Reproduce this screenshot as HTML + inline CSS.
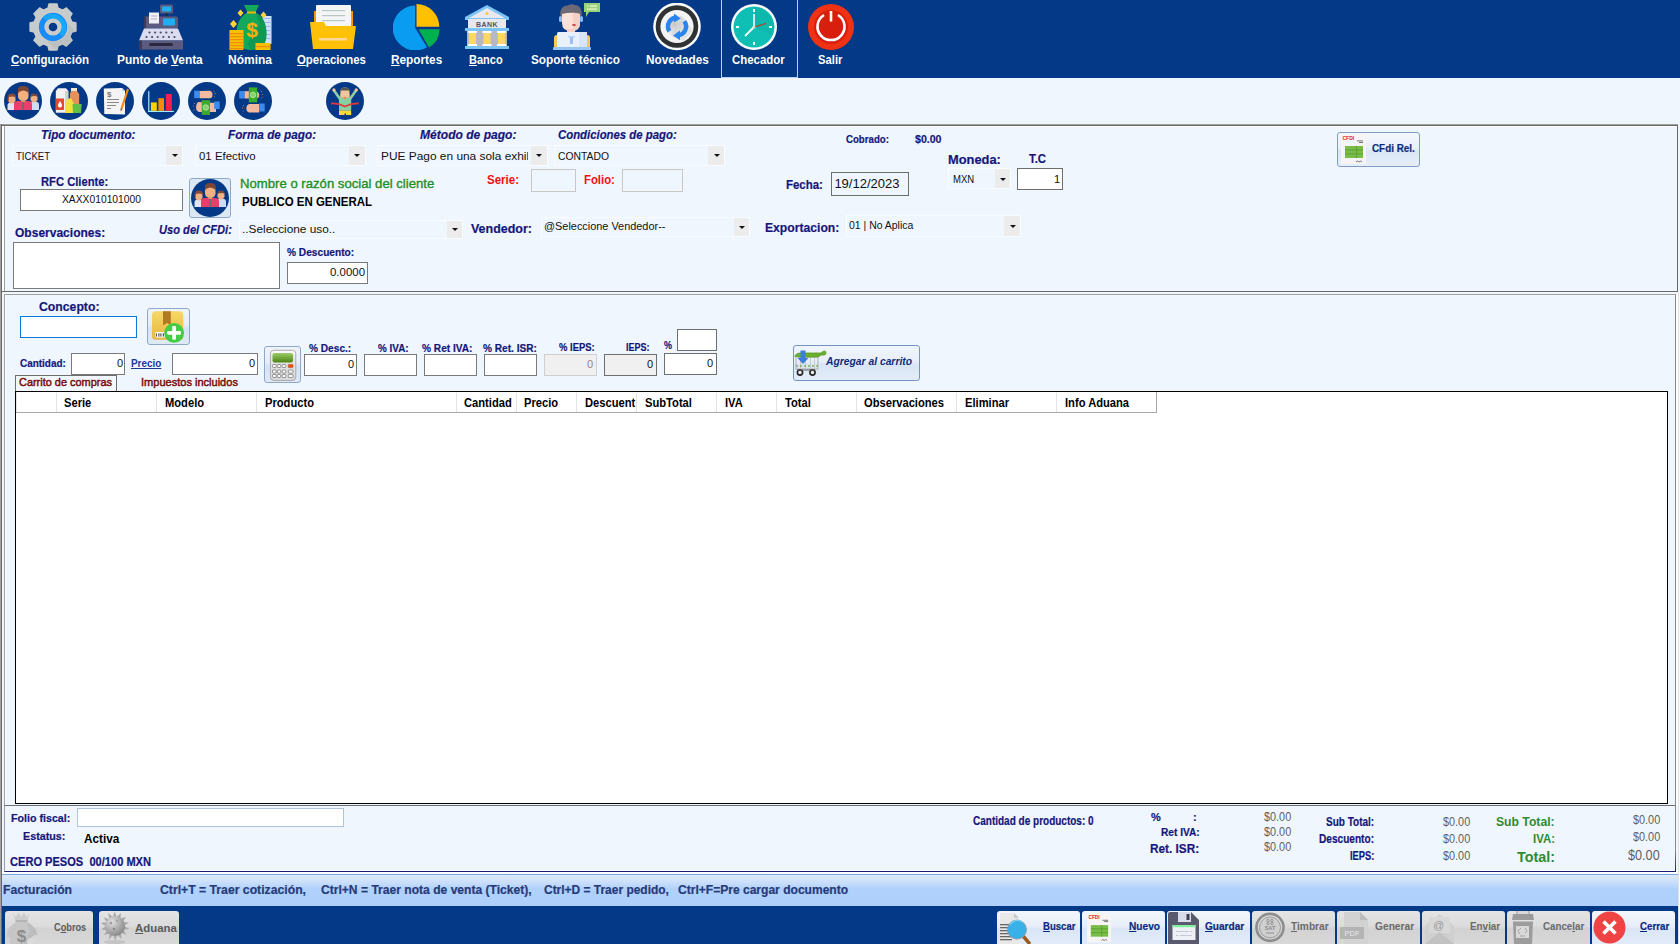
<!DOCTYPE html>
<html><head><meta charset="utf-8"><title>Facturacion</title>
<style>
html,body{margin:0;padding:0;}
body{width:1680px;height:944px;overflow:hidden;position:relative;background:#f0f6fe;font-family:"Liberation Sans",sans-serif;}
body>div{position:absolute;}
.t{white-space:pre;}
u{text-decoration:underline;text-underline-offset:1px;}
svg{display:block;}
</style></head><body>
<div style="left:0px;top:0px;width:1680px;height:78px;background:#033986"></div>
<div style="left:721px;top:0px;width:77px;height:78px;border-left:1px solid #b4d4fc;border-right:1px solid #b4d4fc;border-bottom:1px solid #b4d4fc;box-sizing:border-box;height:78px"></div>
<div style="left:29px;top:3px;width:48px;height:48px"><svg width="48" height="48" viewBox="0 0 48 48"><defs><clipPath id="gclip"><polygon points="18.95,5.16 19.95,1.05 28.05,1.05 29.05,5.16 33.75,7.11 37.36,4.91 43.09,10.64 40.89,14.25 42.84,18.95 46.95,19.95 46.95,28.05 42.84,29.05 40.89,33.75 43.09,37.36 37.36,43.09 33.75,40.89 29.05,42.84 28.05,46.95 19.95,46.95 18.95,42.84 14.25,40.89 10.64,43.09 4.91,37.36 7.11,33.75 5.16,29.05 1.05,28.05 1.05,19.95 5.16,18.95 7.11,14.25 4.91,10.64 10.64,4.91 14.25,7.11"/></clipPath></defs><polygon points="18.95,5.16 19.95,1.05 28.05,1.05 29.05,5.16 33.75,7.11 37.36,4.91 43.09,10.64 40.89,14.25 42.84,18.95 46.95,19.95 46.95,28.05 42.84,29.05 40.89,33.75 43.09,37.36 37.36,43.09 33.75,40.89 29.05,42.84 28.05,46.95 19.95,46.95 18.95,42.84 14.25,40.89 10.64,43.09 4.91,37.36 7.11,33.75 5.16,29.05 1.05,28.05 1.05,19.95 5.16,18.95 7.11,14.25 4.91,10.64 10.64,4.91 14.25,7.11" fill="#c7cbcb" stroke="#c7cbcb" stroke-width="1.4" stroke-linejoin="round"/><path d="M33 14 L48 30 L48 48 L28 48 L14 34Z" fill="#b4b8b8" opacity="0.55" clip-path="url(#gclip)"/><circle cx="24" cy="24" r="14.8" fill="#d6cfc0"/><circle cx="24" cy="24" r="14.2" fill="#1a8cf8"/><path d="M14 14 A14.2 14.2 0 0 1 34 34 Z" fill="#18a8fa"/><circle cx="24" cy="24" r="8.6" fill="#d6cfc0"/><circle cx="24" cy="24" r="8" fill="#c9ccca"/><circle cx="24" cy="24" r="4.3" fill="#033986"/></svg></div>
<div style="left:139px;top:4px;width:44px;height:46px"><svg width="44" height="46" viewBox="0 0 44 45"><rect x="21" y="0" width="13" height="9" rx="1.5" fill="#5d5a80"/><rect x="23" y="2" width="9" height="5" fill="#1eb0f5"/><rect x="26" y="9" width="3" height="3" fill="#2a2a45"/><rect x="5" y="12" width="34" height="12" rx="2" fill="#5d5a80"/><rect x="5" y="12" width="2" height="12" fill="#3c3a5a"/><rect x="10" y="8" width="10" height="11" fill="#f0f0f4"/><rect x="12" y="11" width="6" height="1" fill="#b0b0d0"/><rect x="12" y="14" width="6" height="1" fill="#b0b0d0"/><rect x="24" y="14" width="12" height="7" rx="1" fill="#1eb0f5"/><path d="M5 24 L39 24 L44 36 L0 36Z" fill="#dcdcf0"/><rect x="0" y="36" width="44" height="9" fill="#5d5a80"/><rect x="0" y="36" width="3" height="9" fill="#3c3a5a"/><rect x="10" y="38.5" width="24" height="3" rx="1.5" fill="#2a2840"/><circle cx="10.5" cy="28" r="1.1" fill="#4a4868"/><circle cx="16.1" cy="28" r="1.1" fill="#4a4868"/><circle cx="21.7" cy="28" r="1.1" fill="#4a4868"/><circle cx="27.3" cy="28" r="1.1" fill="#4a4868"/><circle cx="32.9" cy="28" r="1.1" fill="#4a4868"/><circle cx="7.5" cy="32.5" r="1.1" fill="#4a4868"/><circle cx="13.1" cy="32.5" r="1.1" fill="#4a4868"/><circle cx="18.7" cy="32.5" r="1.1" fill="#4a4868"/><circle cx="24.3" cy="32.5" r="1.1" fill="#4a4868"/><circle cx="29.9" cy="32.5" r="1.1" fill="#4a4868"/><circle cx="35.5" cy="32.5" r="1.1" fill="#4a4868"/></svg></div>
<div style="left:229px;top:4px;width:45px;height:46px"><svg width="45" height="46" viewBox="0 0 44 46"><rect x="33" y="12" width="9" height="28" fill="#cfe0ff"/><rect x="33" y="14" width="9" height="1" fill="#9ab8f0"/><rect x="33" y="18" width="9" height="1" fill="#9ab8f0"/><rect x="33" y="22" width="9" height="1" fill="#9ab8f0"/><rect x="33" y="26" width="9" height="1" fill="#9ab8f0"/><rect x="33" y="30" width="9" height="1" fill="#9ab8f0"/><rect x="33" y="34" width="9" height="1" fill="#9ab8f0"/><path d="M14.5 1 L29.5 1 L26 8.5 Q37 14 37 30 Q37 46 22 46 Q7 46 7 30 Q7 14 18 8.5Z" fill="#14a85c"/><path d="M26 8.5 Q37 14 37 30 Q37 46 22 46 L18 40 L30 20Z" fill="#0b8a48" opacity="0.55"/><rect x="17.5" y="7.5" width="9" height="2" fill="#f5b400"/><text x="22.5" y="33" font-family="Liberation Sans" font-weight="700" font-size="21" fill="#f7b20a" text-anchor="middle">$</text><rect x="0" y="26" width="14" height="20" fill="#f5c000"/><rect x="26" y="39" width="15" height="7" fill="#f5c000"/><path d="M0.5 20 L4 16 L7.5 20 L4 24Z" fill="#ffd23a"/><path d="M8 9 L11 5.5 L14 9 L11 12.5Z" fill="#ffd23a"/><path d="M31 11 L34 7.5 L37 11 L34 14.5Z" fill="#ffd23a"/><rect x="0" y="29" width="14" height="1.2" fill="#f08a10"/><rect x="0" y="32" width="14" height="1.2" fill="#f08a10"/><rect x="0" y="35" width="14" height="1.2" fill="#f08a10"/><rect x="0" y="38" width="14" height="1.2" fill="#f08a10"/><rect x="0" y="41" width="14" height="1.2" fill="#f08a10"/><rect x="0" y="44" width="14" height="1.2" fill="#f08a10"/><rect x="26" y="42" width="15" height="1.2" fill="#f08a10"/></svg></div>
<div style="left:310px;top:5px;width:46px;height:44px"><svg width="46" height="44" viewBox="0 0 46 44"><rect x="4" y="6" width="39" height="20" fill="#ff9800"/><rect x="6" y="0" width="35" height="26" rx="1" fill="#f4f6f6"/><rect x="12" y="5" width="23" height="1.2" fill="#b8c8c8"/><rect x="12" y="10" width="23" height="1.2" fill="#b8c8c8"/><rect x="12" y="15" width="23" height="1.2" fill="#b8c8c8"/><path d="M0 17 L14 17 L16 21 L46 21 L43 44 L3 44Z" fill="#ffc107"/><rect x="9" y="33" width="28" height="2.5" fill="#ffd79a"/></svg></div>
<div style="left:393px;top:3px;width:47px;height:47px"><svg width="47" height="47" viewBox="0 0 47 47"><path d="M22.2,25 L22.2,2.5 A22.5,22.5 0 1 0 34,44.2 Z" fill="#0a9cf0"/><path d="M23.5,23.8 L23.5,1 A22.8,22.8 0 0 1 46.3,23.8 Z" fill="#ffc000"/><path d="M25.5,26.3 L46.5,26.3 A21,21 0 0 1 36,44.5 Z" fill="#00b04f"/></svg></div>
<div style="left:465px;top:5px;width:44px;height:44px"><svg width="44" height="44" viewBox="0 0 44 44"><path d="M22 0 L44 12 L44 15 L0 15 L0 12Z" fill="#7cc4f4"/><path d="M22 3 L40 13 L4 13Z" fill="#e8e8ee"/><circle cx="22" cy="8.5" r="1.5" fill="#ffc830"/><rect x="3" y="14" width="38" height="9" fill="#e8e8ee"/><text x="22" y="22" font-family="Liberation Sans" font-weight="700" font-size="7" fill="#5a5060" text-anchor="middle" letter-spacing="0.5">BANK</text><rect x="0" y="23" width="44" height="3" fill="#7cc4f4"/><rect x="2" y="26" width="40" height="15" fill="#b8b8c4"/><rect x="4" y="28" width="7" height="12" fill="#ffd860"/><rect x="18.5" y="28" width="7" height="12" fill="#ffd860"/><rect x="33" y="28" width="7" height="12" fill="#ffd860"/><rect x="3" y="26" width="9" height="2" fill="#fff"/><rect x="17.5" y="26" width="9" height="2" fill="#fff"/><rect x="32" y="26" width="9" height="2" fill="#fff"/><rect x="3" y="39" width="9" height="2" fill="#fff"/><rect x="17.5" y="39" width="9" height="2" fill="#fff"/><rect x="32" y="39" width="9" height="2" fill="#fff"/><rect x="0" y="41" width="44" height="3" fill="#7cc4f4"/></svg></div>
<div style="left:553px;top:3px;width:48px;height:48px"><svg width="48" height="48" viewBox="0 0 48 48"><path d="M31 0 L47 0 L47 9 L36 9 L33 14 L33 9 L31 9Z" fill="#9ad27a"/><rect x="34" y="2.5" width="1.5" height="1.2" fill="#eafae0"/><rect x="37" y="2.5" width="7" height="1.2" fill="#eafae0"/><rect x="34" y="5.5" width="10" height="1.2" fill="#eafae0"/><rect x="1" y="32" width="36" height="14" rx="3" fill="#f8c85a"/><path d="M7.5 14 Q6.5 8 9 5 Q11 2 15 2.5 Q18 0.5 22 2 Q27 2.5 28 7 Q29.5 10 28.5 14Z" fill="#6d6a78"/><path d="M9 11 Q18 8.5 27 11 L27 20 Q27 28 18 28 Q9 28 9 20Z" fill="#fde0d6"/><path d="M20 9.5 L27 11 L27 20 Q27 27 20 28Z" fill="#f4cfc4"/><rect x="14" y="26" width="8" height="6" fill="#fad0c4"/><rect x="6" y="13" width="3" height="6" rx="1.5" fill="#8ab8f0"/><rect x="27" y="13" width="3" height="6" rx="1.5" fill="#8ab8f0"/><ellipse cx="21" cy="22" rx="2" ry="1" fill="#d04050"/><rect x="4" y="29" width="30" height="16" rx="1.5" fill="#e8f0fc"/><rect x="26" y="29" width="8" height="16" fill="#d8e4f8"/><path d="M17 35 L17 41 L20 41 L20 35 Q22 34 22 32 L20.5 33.5 L16.5 33.5 L15 32 Q15 34 17 35Z" fill="#9ac0f4"/><rect x="0" y="44" width="38" height="3" rx="1" fill="#98c4f4"/></svg></div>
<div style="left:653px;top:3px;width:48px;height:48px"><svg width="48" height="48" viewBox="0 0 48 48"><defs><radialGradient id="rfg" cx="0.4" cy="0.4" r="0.7"><stop offset="0" stop-color="#c8c8c8"/><stop offset="0.6" stop-color="#e6e6e6"/><stop offset="1" stop-color="#f6f6f6"/></radialGradient></defs><circle cx="24" cy="23.5" r="23.8" fill="#fbfbfb"/><circle cx="24" cy="23.5" r="21.3" fill="#2e3232"/><circle cx="24" cy="23.5" r="16.6" fill="#f4f4f4"/><circle cx="24" cy="23.5" r="11" fill="url(#rfg)"/><path d="M28 12 L40 28 L30 38 L18 33Z" fill="#cfd2d2" opacity="0.5"/><path d="M16.4 28.3 A9 9 0 0 1 23.5 14.5" fill="none" stroke="#2a86ee" stroke-width="4.4"/><path d="M21 10.4 L27.8 15.6 L21 19.6Z" fill="#2a86ee"/><path d="M31.3 18.2 A9 9 0 0 1 24.5 32.5" fill="none" stroke="#2a86ee" stroke-width="4.4"/><path d="M27 27.6 L20 32.6 L27 37.2Z" fill="#2a86ee"/></svg></div>
<div style="left:731px;top:4px;width:46px;height:46px"><svg width="46" height="46" viewBox="0 0 46 46"><circle cx="23" cy="23" r="23" fill="#fbfbfb"/><circle cx="23" cy="23" r="20.5" fill="#10bfb4"/><path d="M23 23 L23 3 A20 20 0 0 1 41 31Z" fill="#0aa89e" opacity="0.35"/><rect x="22" y="5" width="2" height="3" fill="#fff"/><rect x="22" y="38" width="2" height="3" fill="#fff"/><rect x="5" y="22" width="3" height="2" fill="#fff"/><rect x="38" y="22" width="3" height="2" fill="#fff"/><rect x="22.2" y="10" width="1.6" height="13" fill="#fff"/><path d="M23 23 L14 32" stroke="#fff" stroke-width="1.8"/><path d="M23 23 L35 19.5" stroke="#b84020" stroke-width="1.2"/><circle cx="23" cy="23" r="1.5" fill="#ddd"/></svg></div>
<div style="left:808px;top:4px;width:46px;height:46px"><svg width="46" height="46" viewBox="0 0 46 46"><circle cx="23" cy="23" r="23" fill="#f03214"/><circle cx="23" cy="23" r="17" fill="#d81e0c"/><path d="M16 11 A13.5 13.5 0 1 0 30 11" fill="none" stroke="#fff" stroke-width="2.6"/><rect x="21.7" y="7" width="2.6" height="10.5" fill="#fff"/></svg></div>
<div style="left:4px;top:81.8px;width:38px;height:38px"><svg width="38" height="38" viewBox="0 0 38 38"><circle cx="19" cy="19" r="19" fill="#033986"/><path d="M3.5 28 L3.5 23 Q3.5 20.5 7.5 20.5 Q11.5 20.5 12 23 L12 28Z" fill="#dfe4f0"/><path d="M4 17 Q4 12 7.7 12 Q11.5 12 11.5 17 L11.5 19 Q10 21.5 7.7 21.5 Q5.5 21.5 4 19Z" fill="#f0b080"/><path d="M3.5 18 Q3 11.5 7.7 11.5 Q12.5 11.5 12 16 L11 15 Q8 14 5 15 L4.5 20Z" fill="#8a4a3a"/><path d="M25 28 L25 22.5 Q25 19.5 30 19.5 Q35 19.5 35 22.5 L35 28Z" fill="#cfdcf4"/><path d="M26.5 16 Q26.5 12 30 12 Q33.5 12 33.5 16 L33.5 18 Q32 20.5 30 20.5 Q28 20.5 26.5 18Z" fill="#f0b080"/><path d="M26 15.5 Q26.5 11.5 30 11.5 Q33.5 11.5 34 15 Q30 13 26 15.5Z" fill="#7a4a3a"/><path d="M10 28 L10 22 Q10 19 14 19 L24 19 Q28 19 28 22 L28 28Z" fill="#e8406a"/><rect x="18.2" y="19" width="1.8" height="9" fill="#6a6a7a"/><path d="M14 10 Q14 6 19 6 Q24.5 6 24.5 10 L24.5 15 Q23.5 19 19.2 19 Q15 19 14 15Z" fill="#f0b080"/><path d="M13.8 12 L13.8 8 Q13.8 4 19.2 4 Q24.8 4 24.8 8 L24.8 12 Q24 9 19.2 8.5 Q14.5 9 13.8 12Z" fill="#7a4636"/><rect x="17.5" y="18" width="3.5" height="2" fill="#e09a70"/></svg></div>
<div style="left:50px;top:81.8px;width:38px;height:38px"><svg width="38" height="38" viewBox="0 0 38 38"><circle cx="19" cy="19" r="19" fill="#033986"/><path d="M5.8 9 L8 6.3 L16 6.3 L18.3 9 L18.3 30.8 L5.8 30.8Z" fill="#f2f2f2"/><rect x="15" y="9" width="3.3" height="21.8" fill="#d4d0cc"/><rect x="6" y="16.5" width="8" height="11.5" fill="#e04a30"/><path d="M10 19 Q12 22 12 23.5 Q12 25.5 10 25.5 Q8 25.5 8 23.5 Q8 22 10 19Z" fill="#fff"/><rect x="21" y="6" width="6" height="3" fill="#fbe6c8"/><path d="M21 9 L27 9 L29.2 12 L29.2 27 L20 27 L20 12Z" fill="#e8905a"/><path d="M17 17 L21 16 L24 22 L24 31 L15 31 L15 24Z" fill="#f2e040"/><path d="M22.5 22 L31.7 22 L31 31 L23 31Z" fill="#62c046"/></svg></div>
<div style="left:96px;top:81.8px;width:38px;height:38px"><svg width="38" height="38" viewBox="0 0 38 38"><circle cx="19" cy="19" r="19" fill="#033986"/><path d="M7.8 6.5 L26 6 L29 9 L29 32.5 L8.3 32 Z" fill="#f4f4f4"/><path d="M26 6 L26 9 L29 9Z" fill="#d8d8d8"/><text x="11" y="14.5" font-family="Liberation Sans" font-size="8" font-weight="700" fill="#777">$</text><rect x="11" y="17" width="12" height="1" fill="#888"/><rect x="11" y="20" width="12" height="1" fill="#888"/><rect x="11" y="23" width="9" height="1" fill="#888"/><rect x="11" y="26" width="4" height="1" fill="#888"/><path d="M31 6.5 L33 7.5 L26.5 27 L24.5 26.5Z" fill="#f08a10"/><path d="M24.5 26.5 L26.5 27 L24.8 29.5Z" fill="#555"/></svg></div>
<div style="left:142px;top:81.8px;width:38px;height:38px"><svg width="38" height="38" viewBox="0 0 38 38"><circle cx="19" cy="19" r="19" fill="#033986"/><rect x="6.2" y="9.2" width="1.2" height="20.8" fill="#a8ecff"/><rect x="6.2" y="28.8" width="25.6" height="1.2" fill="#a8ecff"/><rect x="8.9" y="20.4" width="5.9" height="8.4" fill="#ffd000"/><rect x="16.4" y="16.2" width="5.6" height="12.6" fill="#ff8a00"/><rect x="23.9" y="12" width="5.9" height="16.8" fill="#f52050"/></svg></div>
<div style="left:188px;top:81.8px;width:38px;height:38px"><svg width="38" height="38" viewBox="0 0 38 38"><circle cx="19" cy="19" r="19" fill="#033986"/><rect x="6.2" y="8.7" width="5.5" height="7.5" fill="#3a8cf0"/><path d="M11.7 9 L22 8.8 Q24.5 9.5 24.5 12.5 Q24.5 16 22 16.2 L11.7 16.2Z" fill="#f5b8a0"/><path d="M25.5 9 l1 0.5 M26.5 11.5 l1.2 0 M26 14.5 l1 -0.5" stroke="#e88050" stroke-width="0.8"/><path d="M28 21 L10 20 Q8 22 8 25 Q8 29 11 30 L28 30Z" fill="#f5b8a0"/><rect x="26.2" y="19.5" width="5.5" height="7.5" fill="#3a8cf0"/><rect x="13.7" y="18.2" width="8.3" height="14.7" fill="#3caa2a"/><circle cx="17.8" cy="25.5" r="2.8" fill="#88d070" stroke="#d8f0c8" stroke-width="0.6"/><path d="M7 21 l-1 1 M6 24 l-1 0 M6.5 27.5 l-1 0.8" stroke="#e88050" stroke-width="0.8"/></svg></div>
<div style="left:234px;top:81.8px;width:38px;height:38px"><svg width="38" height="38" viewBox="0 0 38 38"><circle cx="19" cy="19" r="19" fill="#033986"/><rect x="5.2" y="9" width="5.5" height="7.5" fill="#3a8cf0"/><path d="M10.7 9.2 L22 9 Q25.2 10 25.2 13 Q25.2 16.5 22 16.5 L10.7 16.5Z" fill="#f5b8a0"/><rect x="14.8" y="5.4" width="8.4" height="15" fill="#3caa2a"/><circle cx="19" cy="12.9" r="2.8" fill="#88d070" stroke="#d8f0c8" stroke-width="0.6"/><path d="M27 9 l1 1 M28 12.5 l1 0 M27.5 16 l1 -0.8" stroke="#e88050" stroke-width="0.8"/><path d="M25.2 22 L15 22 Q12.3 23 12.3 26 Q12.3 30 15 30.4 L25.2 30.4Z" fill="#f5b8a0"/><rect x="25.2" y="21.5" width="5.5" height="8" fill="#3a8cf0"/><path d="M10 23 l-1 1 M9 26 l-1 0 M9.5 29 l-1 0.8" stroke="#e88050" stroke-width="0.8"/></svg></div>
<div style="left:326px;top:81.8px;width:38px;height:38px"><svg width="38" height="38" viewBox="0 0 38 38"><circle cx="19" cy="19" r="19" fill="#033986"/><path d="M14 17 L8 8.5" stroke="#88d0a0" stroke-width="2.6" stroke-linecap="round"/><path d="M24 17 L30 8.5" stroke="#88d0a0" stroke-width="2.6" stroke-linecap="round"/><circle cx="7.9" cy="7.9" r="1.6" fill="#f5c890"/><circle cx="30.3" cy="7.9" r="1.6" fill="#f5c890"/><rect x="13" y="15.5" width="12.2" height="13" rx="1" fill="#88d0a0"/><rect x="13" y="28.4" width="12.2" height="4.6" fill="#f8d840"/><rect x="18.5" y="31.5" width="1.5" height="1.5" fill="#033986"/><path d="M14.2 10 Q14.2 5.5 19 5.5 Q23.7 5.5 23.7 10 L23.7 15.7 L14.2 15.7Z" fill="#f0c898"/><path d="M14.2 13 L14.2 9.5 Q14.2 5.5 19 5.5 Q23.7 5.5 23.7 9.5 L23.7 13 L23 8.5 L15 8.5Z" fill="#555"/><circle cx="19" cy="16" r="1.3" fill="#f08a60"/><path d="M5.2 21.5 Q12 21 19 24.5 Q26 21 32.7 21.5" fill="none" stroke="#e03a3a" stroke-width="1.8"/></svg></div>
<div style="left:0px;top:124px;width:1678px;height:168px;border-top:1px solid #a0a0a0;border-left:1px solid #a0a0a0;box-sizing:border-box"></div>
<div style="left:1px;top:125px;width:1677px;height:167px;border-top:1px solid #696969;border-left:1px solid #696969;border-right:1px solid #696969;border-bottom:1px solid #696969;box-sizing:border-box"></div>
<div style="left:2px;top:126px;width:1675px;height:165px;border-top:1px solid #fff;border-left:2px solid #fff;box-sizing:border-box"></div>
<div style="left:4px;top:126px;width:1px;height:165px;background:#a0a0a0"></div>
<div style="left:0px;top:124px;width:1px;height:820px;background:#a0a0a0"></div>
<div style="left:1px;top:124px;width:1px;height:820px;background:#696969"></div>
<div style="left:12px;top:145px;width:171px;height:21px;background:#f0f6fe;border:1px solid #fafcff;box-sizing:border-box"></div>
<div style="left:166px;top:146px;width:16px;height:19px;background:#ececec"></div>
<div style="left:172px;top:154px;width:0;height:0;border-left:3px solid transparent;border-right:3px solid transparent;border-top:3px solid #111"></div>
<div style="left:195px;top:145px;width:171px;height:21px;background:#f0f6fe;border:1px solid #fafcff;box-sizing:border-box"></div>
<div style="left:349px;top:146px;width:16px;height:19px;background:#ececec"></div>
<div style="left:354px;top:154px;width:0;height:0;border-left:3px solid transparent;border-right:3px solid transparent;border-top:3px solid #111"></div>
<div style="left:377px;top:145px;width:171px;height:21px;background:#f0f6fe;border:1px solid #fafcff;box-sizing:border-box"></div>
<div style="left:531px;top:146px;width:16px;height:19px;background:#ececec"></div>
<div style="left:536px;top:154px;width:0;height:0;border-left:3px solid transparent;border-right:3px solid transparent;border-top:3px solid #111"></div>
<div style="left:554px;top:145px;width:171px;height:21px;background:#f0f6fe;border:1px solid #fafcff;box-sizing:border-box"></div>
<div style="left:708px;top:146px;width:16px;height:19px;background:#ececec"></div>
<div style="left:714px;top:154px;width:0;height:0;border-left:3px solid transparent;border-right:3px solid transparent;border-top:3px solid #111"></div>
<div style="left:948px;top:168px;width:63px;height:21px;background:#f0f6fe;border:1px solid #fafcff;box-sizing:border-box"></div>
<div style="left:995px;top:169px;width:15px;height:19px;background:#ececec"></div>
<div style="left:1000px;top:178px;width:0;height:0;border-left:3px solid transparent;border-right:3px solid transparent;border-top:3px solid #111"></div>
<div style="left:1017px;top:168px;width:46px;height:22px;background:#fff;border:1px solid #6e6e6e;box-sizing:border-box"></div>
<div style="left:1337px;top:132px;width:83px;height:35px;border:1px solid #7f9bc6;border-radius:3px;box-sizing:border-box;background:linear-gradient(#f3f7fd,#e9f0fa 45%,#dbe7f6 55%,#e6eefa)"></div>
<div style="left:1341px;top:134px;width:25px;height:30px"><svg width="25" height="30" viewBox="0 0 25 30"><rect x="0" y="0" width="25" height="30" fill="#f6f4f4"/><text x="1.5" y="5.5" font-family="Liberation Sans" font-weight="700" font-size="5" fill="#e8202a">CFDI</text><rect x="16" y="6.5" width="6" height="0.8" fill="#555"/><rect x="18" y="8" width="4" height="0.8" fill="#555"/><rect x="4" y="12" width="18" height="12" fill="#78bd48"/><rect x="4" y="15.5" width="18" height="0.8" fill="#5a9a30"/><rect x="4" y="19.5" width="18" height="0.8" fill="#5a9a30"/><rect x="15" y="12" width="0.8" height="12" fill="#5a9a30"/><path d="M15 28 Q16.5 26 18 28 Q19.5 26 21 28" fill="none" stroke="#555" stroke-width="0.8"/></svg></div>
<div style="left:20px;top:189px;width:163px;height:22px;background:#fff;border:1px solid #7a7a7a;box-sizing:border-box"></div>
<div style="left:189px;top:178px;width:42px;height:40px;border:1px solid #8fa7c8;border-radius:3px;box-sizing:border-box;background:#dde8f5"></div>
<div style="left:191px;top:179px;width:38px;height:38px"><svg width="38" height="38" viewBox="0 0 38 38"><circle cx="19" cy="19" r="19" fill="#033986"/><path d="M3.5 28 L3.5 23 Q3.5 20.5 7.5 20.5 Q11.5 20.5 12 23 L12 28Z" fill="#dfe4f0"/><path d="M4 17 Q4 12 7.7 12 Q11.5 12 11.5 17 L11.5 19 Q10 21.5 7.7 21.5 Q5.5 21.5 4 19Z" fill="#f0b080"/><path d="M3.5 18 Q3 11.5 7.7 11.5 Q12.5 11.5 12 16 L11 15 Q8 14 5 15 L4.5 20Z" fill="#8a4a3a"/><path d="M25 28 L25 22.5 Q25 19.5 30 19.5 Q35 19.5 35 22.5 L35 28Z" fill="#cfdcf4"/><path d="M26.5 16 Q26.5 12 30 12 Q33.5 12 33.5 16 L33.5 18 Q32 20.5 30 20.5 Q28 20.5 26.5 18Z" fill="#f0b080"/><path d="M26 15.5 Q26.5 11.5 30 11.5 Q33.5 11.5 34 15 Q30 13 26 15.5Z" fill="#7a4a3a"/><path d="M10 28 L10 22 Q10 19 14 19 L24 19 Q28 19 28 22 L28 28Z" fill="#e8406a"/><rect x="18.2" y="19" width="1.8" height="9" fill="#6a6a7a"/><path d="M14 10 Q14 6 19 6 Q24.5 6 24.5 10 L24.5 15 Q23.5 19 19.2 19 Q15 19 14 15Z" fill="#f0b080"/><path d="M13.8 12 L13.8 8 Q13.8 4 19.2 4 Q24.8 4 24.8 8 L24.8 12 Q24 9 19.2 8.5 Q14.5 9 13.8 12Z" fill="#7a4636"/><rect x="17.5" y="18" width="3.5" height="2" fill="#e09a70"/></svg></div>
<div style="left:531px;top:169px;width:45px;height:23px;background:#f0f6fe;border:1px solid #c8c8c8;box-sizing:border-box"></div>
<div style="left:622px;top:169px;width:61px;height:23px;background:#f0f6fe;border:1px solid #c8c8c8;box-sizing:border-box"></div>
<div style="left:831px;top:172px;width:78px;height:24px;background:#f0f6fe;border:1px solid #6e6e6e;box-sizing:border-box"></div>
<div style="left:239px;top:220px;width:224px;height:19px;background:#f0f6fe;border:1px solid #fafcff;box-sizing:border-box"></div>
<div style="left:447px;top:221px;width:15px;height:17px;background:#ececec"></div>
<div style="left:452px;top:228px;width:0;height:0;border-left:3px solid transparent;border-right:3px solid transparent;border-top:3px solid #111"></div>
<div style="left:541px;top:217px;width:209px;height:20px;background:#f0f6fe;border:1px solid #fafcff;box-sizing:border-box"></div>
<div style="left:734px;top:218px;width:15px;height:18px;background:#ececec"></div>
<div style="left:739px;top:226px;width:0;height:0;border-left:3px solid transparent;border-right:3px solid transparent;border-top:3px solid #111"></div>
<div style="left:846px;top:215px;width:175px;height:22px;background:#f0f6fe;border:1px solid #fafcff;box-sizing:border-box"></div>
<div style="left:1004px;top:216px;width:16px;height:20px;background:#ececec"></div>
<div style="left:1010px;top:225px;width:0;height:0;border-left:3px solid transparent;border-right:3px solid transparent;border-top:3px solid #111"></div>
<div style="left:13px;top:242px;width:267px;height:47px;background:#fff;border:1px solid #7a7a7a;box-sizing:border-box"></div>
<div style="left:287px;top:262px;width:81px;height:22px;background:#fff;border:1px solid #7a7a7a;box-sizing:border-box"></div>
<div style="left:4px;top:294px;width:1672px;height:512px;border:1px solid #a0a0a0;border-bottom:1px solid #6e6e6e;border-right:1px solid #8a8a8a;box-sizing:border-box"></div>
<div style="left:5px;top:295px;width:1px;height:510px;background:#fff"></div>
<div style="left:1676px;top:294px;width:2px;height:512px;background:#fff"></div>
<div style="left:20px;top:316px;width:117px;height:22px;background:#fff;border:1px solid #0a78d8;box-sizing:border-box"></div>
<div style="left:147px;top:308px;width:43px;height:37px;border:1px solid #8fa7c8;border-radius:3px;box-sizing:border-box;background:linear-gradient(#eef3fb,#e6eef9 45%,#d6e3f4 55%,#e0eaf7)"></div>
<div style="left:147px;top:308px;width:43px;height:37px"><svg width="43" height="37" viewBox="0 0 43 37"><defs><linearGradient id="gbox" x1="0" y1="0" x2="0" y2="1"><stop offset="0" stop-color="#f6d868"/><stop offset="1" stop-color="#e6b640"/></linearGradient></defs><rect x="5" y="3.3" width="31.3" height="28.5" rx="3.5" fill="url(#gbox)"/><path d="M16 3.3 L23.8 3.3 L23.8 17.5 L20 15 L16 17.5Z" fill="#b07a22"/><rect x="8.4" y="24" width="10" height="5.4" rx="0.8" fill="#fff"/><rect x="9" y="25.3" width="1" height="3.3" fill="#555"/><rect x="11" y="25.3" width="0.7" height="3.3" fill="#555"/><rect x="12.5" y="25.3" width="1.2" height="3.3" fill="#555"/><rect x="14.5" y="25.3" width="0.7" height="3.3" fill="#555"/><rect x="16" y="25.3" width="1" height="3.3" fill="#555"/><circle cx="27.1" cy="24.9" r="9.9" fill="#44cc44"/><rect x="25.2" y="18" width="3.8" height="13.8" rx="1.2" fill="#fff"/><rect x="20.2" y="23" width="13.8" height="3.8" rx="1.2" fill="#fff"/></svg></div>
<div style="left:71px;top:353px;width:54px;height:22px;background:#fff;border:1px solid #7a7a7a;box-sizing:border-box"></div>
<div style="left:172px;top:353px;width:86px;height:22px;background:#fff;border:1px solid #7a7a7a;box-sizing:border-box"></div>
<div style="left:264px;top:346px;width:37px;height:37px;border:1px solid #8fa7c8;border-radius:3px;box-sizing:border-box;background:linear-gradient(#eef3fb,#e6eef9 45%,#d6e3f4 55%,#e0eaf7)"></div>
<div style="left:264px;top:346px;width:37px;height:37px"><svg width="37" height="37" viewBox="0 0 37 37"><defs><linearGradient id="cdisp" x1="0" y1="0" x2="0" y2="1"><stop offset="0" stop-color="#9ccc68"/><stop offset="1" stop-color="#4a8412"/></linearGradient><linearGradient id="cbody" x1="0" y1="0" x2="0" y2="1"><stop offset="0" stop-color="#ffffff"/><stop offset="0.2" stop-color="#e8e8e8"/><stop offset="1" stop-color="#d8d8d8"/></linearGradient></defs><rect x="6.4" y="4.3" width="25.4" height="30.2" rx="3.5" fill="url(#cbody)" stroke="#a4a4a4" stroke-width="0.9"/><rect x="8.5" y="7" width="20.5" height="9.5" rx="2" fill="url(#cdisp)"/><rect x="8.5" y="18.5" width="3.7" height="3" rx="0.7" fill="#fafafa" stroke="#6e6e6e" stroke-width="0.7"/><rect x="13.3" y="18.5" width="3.5" height="3" rx="0.7" fill="#fafafa" stroke="#6e6e6e" stroke-width="0.7"/><rect x="18.2" y="18.5" width="3.6" height="3" rx="0.7" fill="#fafafa" stroke="#6e6e6e" stroke-width="0.7"/><rect x="24.3" y="18.4" width="4.7" height="3.2" rx="0.6" fill="#e05010" stroke="#c04010" stroke-width="0.5"/><rect x="8.5" y="24.0" width="3.7" height="3" rx="0.7" fill="#fafafa" stroke="#6e6e6e" stroke-width="0.7"/><rect x="13.3" y="24.0" width="3.5" height="3" rx="0.7" fill="#fafafa" stroke="#6e6e6e" stroke-width="0.7"/><rect x="18.2" y="24.0" width="3.6" height="3" rx="0.7" fill="#fafafa" stroke="#6e6e6e" stroke-width="0.7"/><rect x="24.3" y="24.0" width="4.7" height="3" rx="0.7" fill="#fafafa" stroke="#6e6e6e" stroke-width="0.7"/><rect x="8.5" y="28.5" width="3.7" height="3" rx="0.7" fill="#fafafa" stroke="#6e6e6e" stroke-width="0.7"/><rect x="13.3" y="28.5" width="3.5" height="3" rx="0.7" fill="#fafafa" stroke="#6e6e6e" stroke-width="0.7"/><rect x="18.2" y="28.5" width="3.6" height="3" rx="0.7" fill="#fafafa" stroke="#6e6e6e" stroke-width="0.7"/><rect x="24.3" y="28.5" width="4.7" height="3" rx="0.7" fill="#fafafa" stroke="#6e6e6e" stroke-width="0.7"/></svg></div>
<div style="left:304px;top:354px;width:53px;height:22px;background:#fff;border:1px solid #7a7a7a;box-sizing:border-box"></div>
<div style="left:364px;top:354px;width:53px;height:22px;background:#fff;border:1px solid #7a7a7a;box-sizing:border-box"></div>
<div style="left:424px;top:354px;width:53px;height:22px;background:#fff;border:1px solid #7a7a7a;box-sizing:border-box"></div>
<div style="left:484px;top:354px;width:53px;height:22px;background:#fff;border:1px solid #7a7a7a;box-sizing:border-box"></div>
<div style="left:544px;top:354px;width:53px;height:22px;background:#f0f0f0;border:1px solid #cfcfcf;box-sizing:border-box"></div>
<div style="left:604px;top:354px;width:53px;height:22px;background:#f0f0f0;border:1px solid #6e6e6e;box-sizing:border-box"></div>
<div style="left:677px;top:329px;width:40px;height:22px;background:#fff;border:1px solid #6e6e6e;box-sizing:border-box"></div>
<div style="left:664px;top:353px;width:53px;height:22px;background:#fff;border:1px solid #6e6e6e;box-sizing:border-box"></div>
<div style="left:793px;top:345px;width:127px;height:36px;border:1px solid #7393c8;border-radius:3px;box-sizing:border-box;background:linear-gradient(#f0f5fc,#e8eff9 45%,#d8e5f5 55%,#e4edf9)"></div>
<div style="left:793px;top:345px;width:127px;height:36px"><svg width="127" height="36" viewBox="0 0 127 36"><rect x="3" y="12" width="22" height="12" fill="none" stroke="#b8b8b8" stroke-width="1.2"/><rect x="7" y="12" width="1" height="12" fill="#c8c8c8"/><rect x="12" y="12" width="1" height="12" fill="#c8c8c8"/><rect x="17" y="12" width="1" height="12" fill="#c8c8c8"/><rect x="21" y="12" width="1" height="12" fill="#c8c8c8"/><path d="M3 21 L25 21" stroke="#5a9a20" stroke-width="1.2" stroke-dasharray="2 2"/><path d="M2 12 Q2 8 8 8 L28 8 Q30 6 31.5 6 Q33 6 33 8 Q33 10 31 10 L28 10 Q26 12 24 12 L5 12" fill="#6ab030" stroke="#5a9a20" stroke-width="0.8"/><circle cx="7" cy="27.5" r="2.6" fill="#eee" stroke="#222" stroke-width="1.6"/><circle cx="19.5" cy="27.5" r="2.6" fill="#eee" stroke="#222" stroke-width="1.6"/><path d="M4 25 L22 25" stroke="#666" stroke-width="1"/><rect x="7.5" y="5.5" width="5" height="8" fill="#3a7ed8"/><path d="M4.5 13 L15.5 13 L10 19Z" fill="#3a7ed8"/></svg></div>
<div style="left:15px;top:375px;width:102px;height:17px;border:1px solid #6e6e6e;border-bottom:none;box-sizing:border-box;background:#f3f8fe"></div>
<div style="left:15px;top:391px;width:1653px;height:413px;background:#fff;border:1px solid #000;box-sizing:border-box"></div>
<div style="left:16px;top:392px;width:1141px;height:21px;background:#fff;border-bottom:1px solid #a8a8a8;box-sizing:border-box"></div>
<div style="left:16px;top:392px;width:1px;height:20px;background:#e6e6e6"></div>
<div style="left:56px;top:393px;width:1px;height:19px;background:#e3e3e3"></div>
<div style="left:156px;top:393px;width:1px;height:19px;background:#e3e3e3"></div>
<div style="left:256px;top:393px;width:1px;height:19px;background:#e3e3e3"></div>
<div style="left:456px;top:393px;width:1px;height:19px;background:#e3e3e3"></div>
<div style="left:516px;top:393px;width:1px;height:19px;background:#e3e3e3"></div>
<div style="left:576px;top:393px;width:1px;height:19px;background:#e3e3e3"></div>
<div style="left:636px;top:393px;width:1px;height:19px;background:#e3e3e3"></div>
<div style="left:716px;top:393px;width:1px;height:19px;background:#e3e3e3"></div>
<div style="left:776px;top:393px;width:1px;height:19px;background:#e3e3e3"></div>
<div style="left:856px;top:393px;width:1px;height:19px;background:#e3e3e3"></div>
<div style="left:956px;top:393px;width:1px;height:19px;background:#e3e3e3"></div>
<div style="left:1056px;top:393px;width:1px;height:19px;background:#e3e3e3"></div>
<div style="left:1156px;top:392px;width:1px;height:21px;background:#a8a8a8"></div>
<div style="left:4px;top:806px;width:1672px;height:66px;border-left:1px solid #9a9aa8;border-bottom:1px solid #1c1c70;border-right:1px solid #8a8a8a;box-sizing:border-box"></div>
<div style="left:1675px;top:850px;width:1px;height:22px;background:linear-gradient(#8a8a8a,#1c1c70)"></div>
<div style="left:1678px;top:292px;width:1px;height:652px;background:#e2e2e2"></div>
<div style="left:1679px;top:292px;width:1px;height:652px;background:#fafafa"></div>
<div style="left:5px;top:870px;width:1670px;height:1px;background:#fff"></div>
<div style="left:77px;top:808px;width:267px;height:19px;background:#fff;border:1px solid #b0c4e0;box-sizing:border-box"></div>
<div style="left:2px;top:872px;width:1676px;height:34px;background:linear-gradient(#fff 0px,#fff 2px,#7fa8dc 2px,#7fa8dc 3px,#dce9fc 3px,#cfe1fb 9px,#b0d1fb 17px,#aed0fb 100%)"></div>
<div style="left:2px;top:906px;width:1676px;height:38px;background:#033986"></div>
<div style="left:5px;top:911px;width:88px;height:33px;border-radius:3px 3px 0 0;background:linear-gradient(#e4e4e4,#dcdcdc 45%,#d2d2d2 55%,#d8d8d8)"></div>
<div style="left:99px;top:911px;width:80px;height:33px;border-radius:3px 3px 0 0;background:linear-gradient(#e4e4e4,#dcdcdc 45%,#d2d2d2 55%,#d8d8d8)"></div>
<div style="left:997px;top:911px;width:83px;height:33px;border-radius:3px 3px 0 0;background:linear-gradient(#f2f6fc,#e8eff9 45%,#dae6f6 55%,#e2ecf9)"></div>
<div style="left:1082px;top:911px;width:83px;height:33px;border-radius:3px 3px 0 0;background:linear-gradient(#f2f6fc,#e8eff9 45%,#dae6f6 55%,#e2ecf9)"></div>
<div style="left:1167px;top:911px;width:83px;height:33px;border-radius:3px 3px 0 0;background:linear-gradient(#f2f6fc,#e8eff9 45%,#dae6f6 55%,#e2ecf9)"></div>
<div style="left:1252px;top:911px;width:83px;height:33px;border-radius:3px 3px 0 0;background:linear-gradient(#e4e4e4,#dcdcdc 45%,#d2d2d2 55%,#d8d8d8)"></div>
<div style="left:1337px;top:911px;width:83px;height:33px;border-radius:3px 3px 0 0;background:linear-gradient(#e4e4e4,#dcdcdc 45%,#d2d2d2 55%,#d8d8d8)"></div>
<div style="left:1422px;top:911px;width:83px;height:33px;border-radius:3px 3px 0 0;background:linear-gradient(#e4e4e4,#dcdcdc 45%,#d2d2d2 55%,#d8d8d8)"></div>
<div style="left:1507px;top:911px;width:83px;height:33px;border-radius:3px 3px 0 0;background:linear-gradient(#e4e4e4,#dcdcdc 45%,#d2d2d2 55%,#d8d8d8)"></div>
<div style="left:1592px;top:911px;width:83px;height:33px;border-radius:3px 3px 0 0;background:linear-gradient(#f2f6fc,#e8eff9 45%,#dae6f6 55%,#e2ecf9)"></div>
<div style="left:6px;top:911px;width:36px;height:33px"><svg width="36" height="33" viewBox="0 0 36 33"><path d="M7 2 L10 6 L12.5 1 L15 6 L18 1.5 L20.5 6 L23 2.5 L21.5 10 L9.5 10Z" fill="#cdcdcd"/><rect x="9.5" y="9" width="12" height="2.2" fill="#b4b4b4"/><path d="M10 11 Q0 17 0.5 27 Q1 35 16 35 Q31 35 31.5 27 Q32 17 21 11Z" fill="#c6c6c6"/><path d="M21 11 Q32 17 31.5 27 Q31 35 16 35 L24 20Z" fill="#b8b8b8" opacity="0.6"/><text x="15.5" y="31" font-family="Liberation Sans" font-weight="700" font-size="17" fill="#8c8c8c" text-anchor="middle">$</text><circle cx="30" cy="29" r="5" fill="#d6d6d6"/><circle cx="25" cy="31" r="4" fill="#dadada"/><rect x="0" y="26" width="4" height="8" fill="#d2d2d2"/></svg></div>
<div style="left:100px;top:911px;width:33px;height:33px"><svg width="33" height="33" viewBox="0 0 33 33"><defs><radialGradient id="vg" cx="0.35" cy="0.3" r="0.8"><stop offset="0" stop-color="#e0e0e0"/><stop offset="0.5" stop-color="#b0b0b0"/><stop offset="1" stop-color="#808080"/></radialGradient></defs><ellipse cx="15" cy="31" rx="11" ry="2" fill="#c4c4c4"/><polygon points="29.21,17.88 24.00,14.82 23.22,18.67" fill="#a8a8a8"/><polygon points="26.55,23.76 23.19,18.74 20.81,21.87" fill="#a8a8a8"/><polygon points="21.61,27.91 20.75,21.92 17.25,23.71" fill="#a8a8a8"/><polygon points="15.35,29.50 17.18,23.73 13.25,23.83" fill="#a8a8a8"/><polygon points="9.03,28.21 13.17,23.81 9.59,22.20" fill="#a8a8a8"/><polygon points="3.89,24.31 9.53,22.15 7.01,19.14" fill="#a8a8a8"/><polygon points="0.95,18.57 6.97,19.07 6.00,15.26" fill="#a8a8a8"/><polygon points="0.79,12.12 6.00,15.18 6.78,11.33" fill="#a8a8a8"/><polygon points="3.45,6.24 6.81,11.26 9.19,8.13" fill="#a8a8a8"/><polygon points="8.39,2.09 9.25,8.08 12.75,6.29" fill="#a8a8a8"/><polygon points="14.65,0.50 12.82,6.27 16.75,6.17" fill="#a8a8a8"/><polygon points="20.97,1.79 16.83,6.19 20.41,7.80" fill="#a8a8a8"/><polygon points="26.11,5.69 20.47,7.85 22.99,10.86" fill="#a8a8a8"/><polygon points="29.05,11.43 23.03,10.93 24.00,14.74" fill="#a8a8a8"/><circle cx="15" cy="15" r="10" fill="url(#vg)"/><circle cx="11" cy="12" r="1.3" fill="#9a9a9a"/><circle cx="17" cy="10" r="1" fill="#9a9a9a"/><circle cx="14" cy="18" r="1.2" fill="#8a8a8a"/></svg></div>
<div style="left:998px;top:911px;width:34px;height:33px"><svg width="34" height="33" viewBox="0 0 34 33"><path d="M2 2 L16 2 L21 7 L21 33 L2 33Z" fill="#e8e8e8"/><path d="M16 2 L16 7 L21 7Z" fill="#c8c8c8"/><rect x="2" y="13" width="12" height="1.3" fill="#666"/><rect x="2" y="16" width="12" height="1.3" fill="#666"/><rect x="2" y="19" width="12" height="1.3" fill="#666"/><rect x="2" y="22" width="12" height="1.3" fill="#666"/><rect x="2" y="25" width="12" height="1.3" fill="#666"/><rect x="2" y="28" width="12" height="1.3" fill="#666"/><path d="M25 25 L31 32" stroke="#9a5a20" stroke-width="3.5" stroke-linecap="round"/><circle cx="18.9" cy="18.6" r="9.5" fill="#38b0e8" stroke="#8a9aa8" stroke-width="1"/><path d="M12 14 A8 8 0 0 1 24 11" fill="none" stroke="#7ad0f4" stroke-width="1.2"/></svg></div>
<div style="left:1086.6px;top:912px;width:24px;height:32px"><svg width="24" height="32" viewBox="0 0 25 30"><rect x="0" y="0" width="25" height="30" fill="#f6f4f4"/><text x="1.5" y="5.5" font-family="Liberation Sans" font-weight="700" font-size="5" fill="#e8202a">CFDI</text><rect x="16" y="6.5" width="6" height="0.8" fill="#555"/><rect x="18" y="8" width="4" height="0.8" fill="#555"/><rect x="4" y="12" width="18" height="12" fill="#78bd48"/><rect x="4" y="15.5" width="18" height="0.8" fill="#5a9a30"/><rect x="4" y="19.5" width="18" height="0.8" fill="#5a9a30"/><rect x="15" y="12" width="0.8" height="12" fill="#5a9a30"/><path d="M15 28 Q16.5 26 18 28 Q19.5 26 21 28" fill="none" stroke="#555" stroke-width="0.8"/></svg></div>
<div style="left:1167px;top:911px;width:33px;height:33px"><svg width="33" height="33" viewBox="0 0 33 33"><path d="M1 3 Q1 1 3 1 L24 1 L32 9 L32 33 L1 33Z" fill="#5a5a6e"/><rect x="11" y="1" width="13" height="10" fill="#d8dce8"/><rect x="19.5" y="3" width="3" height="6" fill="#3e3e50"/><rect x="5.5" y="14" width="23" height="15" fill="#eef0f6"/><rect x="5.5" y="14" width="23" height="2.2" fill="#7ef0a0"/><rect x="9" y="20" width="13" height="0.8" fill="#b8c0d0"/><rect x="23" y="20" width="2.5" height="0.8" fill="#b8c0d0"/><rect x="9" y="24" width="2.5" height="0.8" fill="#b8c0d0"/><rect x="13" y="24" width="12" height="0.8" fill="#b8c0d0"/></svg></div>
<div style="left:1252.5px;top:911px;width:32px;height:33px"><svg width="32" height="33" viewBox="0 0 32 33"><circle cx="17" cy="16.4" r="13.5" fill="none" stroke="#8e8e8e" stroke-width="2.6"/><circle cx="17" cy="16.4" r="10.5" fill="#cfcfcf" stroke="#9a9a9a" stroke-width="1"/><text x="17" y="19" font-family="Liberation Sans" font-weight="700" font-size="5.5" fill="#8a8a8a" text-anchor="middle">SAT</text><circle cx="15" cy="9.5" r="1.2" fill="none" stroke="#8a8a8a" stroke-width="0.8"/><circle cx="19" cy="9.5" r="1.2" fill="none" stroke="#8a8a8a" stroke-width="0.8"/><circle cx="15" cy="12.5" r="1.2" fill="none" stroke="#8a8a8a" stroke-width="0.8"/><circle cx="19" cy="12.5" r="1.2" fill="none" stroke="#8a8a8a" stroke-width="0.8"/><rect x="13" y="21" width="8" height="2" fill="#b0b0b0"/></svg></div>
<div style="left:1340px;top:911px;width:33px;height:33px"><svg width="33" height="33" viewBox="0 0 33 33"><path d="M4 1 L20 1 L28 9 L28 33 L4 33Z" fill="#d2d2d2"/><path d="M20 1 L20 9 L28 9Z" fill="#bcbcbc"/><rect x="0" y="16" width="24" height="12" rx="1" fill="#b4b4b4"/><text x="12" y="25.3" font-family="Liberation Sans" font-size="7.5" fill="#e8e8e8" text-anchor="middle">PDF</text></svg></div>
<div style="left:1423px;top:911px;width:33px;height:33px"><svg width="33" height="33" viewBox="0 0 33 33"><path d="M2 15 L16.5 3 L31 15 L31 33 L2 33Z" fill="#d0d0d0"/><rect x="6" y="6" width="21" height="16" fill="#d8d8d8"/><path d="M2 33 L16.5 21 L31 33Z" fill="#c2c2c2"/><text x="15.5" y="17.5" font-family="Liberation Sans" font-size="11" fill="#9a9a9a" text-anchor="middle">@</text></svg></div>
<div style="left:1508px;top:911px;width:33px;height:33px"><svg width="33" height="33" viewBox="0 0 33 33"><rect x="8" y="0" width="14" height="4" fill="#bcbcbc"/><rect x="10" y="0" width="10" height="3" fill="#d8d8d8"/><path d="M5 3 L25 3 L26 9 L4 9Z" fill="#9c9c9c"/><rect x="3.5" y="9" width="23" height="1.5" fill="#e0e0e0"/><path d="M5 10.5 L25 10.5 L24 33 L6 33Z" fill="#9c9c9c"/><rect x="8" y="15" width="13" height="12" fill="#d8d8d8"/><path d="M12 23 L10 20 L13 17 M17 17 L19 20 L17 22 M12 25 L17 25" fill="none" stroke="#999" stroke-width="0.8"/></svg></div>
<div style="left:1592.6px;top:911px;width:33px;height:33px"><svg width="33" height="33" viewBox="0 0 33 33"><circle cx="16.5" cy="16.5" r="16" fill="#f04444"/><path d="M10.5 10.5 L22.5 22.5 M22.5 10.5 L10.5 22.5" stroke="#fff" stroke-width="3.6" stroke-linecap="butt"/></svg></div>
<div class="t" style="left:11.00px;top:53.00px;font-size:13px;line-height:13px;font-weight:700;color:#ffffff;font-family:'Liberation Sans',sans-serif;transform:scaleX(0.8853);transform-origin:0 0;"><u>C</u>onfiguración</div>
<div class="t" style="left:116.60px;top:53.00px;font-size:13px;line-height:13px;font-weight:700;color:#ffffff;font-family:'Liberation Sans',sans-serif;transform:scaleX(0.9126);transform-origin:0 0;">Punto de <u>V</u>enta</div>
<div class="t" style="left:228.40px;top:53.00px;font-size:13px;line-height:13px;font-weight:700;color:#ffffff;font-family:'Liberation Sans',sans-serif;transform:scaleX(0.9230);transform-origin:0 0;">Nómina</div>
<div class="t" style="left:297.30px;top:53.00px;font-size:13px;line-height:13px;font-weight:700;color:#ffffff;font-family:'Liberation Sans',sans-serif;transform:scaleX(0.8747);transform-origin:0 0;"><u>O</u>peraciones</div>
<div class="t" style="left:391.30px;top:53.00px;font-size:13px;line-height:13px;font-weight:700;color:#ffffff;font-family:'Liberation Sans',sans-serif;transform:scaleX(0.9085);transform-origin:0 0;"><u>R</u>eportes</div>
<div class="t" style="left:469.30px;top:53.00px;font-size:13px;line-height:13px;font-weight:700;color:#ffffff;font-family:'Liberation Sans',sans-serif;transform:scaleX(0.8456);transform-origin:0 0;"><u>B</u>anco</div>
<div class="t" style="left:531.20px;top:53.00px;font-size:13px;line-height:13px;font-weight:700;color:#ffffff;font-family:'Liberation Sans',sans-serif;transform:scaleX(0.9059);transform-origin:0 0;">Soporte técnico</div>
<div class="t" style="left:645.50px;top:53.00px;font-size:13px;line-height:13px;font-weight:700;color:#ffffff;font-family:'Liberation Sans',sans-serif;transform:scaleX(0.9052);transform-origin:0 0;">Novedades</div>
<div class="t" style="left:732.10px;top:53.00px;font-size:13px;line-height:13px;font-weight:700;color:#ffffff;font-family:'Liberation Sans',sans-serif;transform:scaleX(0.8788);transform-origin:0 0;">Checador</div>
<div class="t" style="left:817.50px;top:53.00px;font-size:13px;line-height:13px;font-weight:700;color:#ffffff;font-family:'Liberation Sans',sans-serif;transform:scaleX(0.8656);transform-origin:0 0;">Salir</div>
<div class="t" style="left:40.50px;top:128.00px;font-size:13px;line-height:13px;font-weight:700;color:#16167a;font-family:'Liberation Sans',sans-serif;font-style:italic;transform:scaleX(0.8983);transform-origin:0 0;-webkit-text-stroke:0.2px #16167a;">Tipo documento:</div>
<div class="t" style="left:228.20px;top:128.00px;font-size:13px;line-height:13px;font-weight:700;color:#16167a;font-family:'Liberation Sans',sans-serif;font-style:italic;transform:scaleX(0.9034);transform-origin:0 0;-webkit-text-stroke:0.2px #16167a;">Forma de pago:</div>
<div class="t" style="left:419.50px;top:128.00px;font-size:13px;line-height:13px;font-weight:700;color:#16167a;font-family:'Liberation Sans',sans-serif;font-style:italic;transform:scaleX(0.9279);transform-origin:0 0;-webkit-text-stroke:0.2px #16167a;">Método de pago:</div>
<div class="t" style="left:557.60px;top:128.00px;font-size:13px;line-height:13px;font-weight:700;color:#16167a;font-family:'Liberation Sans',sans-serif;font-style:italic;transform:scaleX(0.8741);transform-origin:0 0;-webkit-text-stroke:0.2px #16167a;">Condiciones de pago:</div>
<div class="t" style="left:16.00px;top:150.69px;font-size:11px;line-height:11px;font-weight:400;color:#111;font-family:'Liberation Sans',sans-serif;transform:scaleX(0.8690);transform-origin:0 0;">TICKET</div>
<div class="t" style="left:199.00px;top:150.69px;font-size:11px;line-height:11px;font-weight:400;color:#111;font-family:'Liberation Sans',sans-serif;transform:scaleX(1.0400);transform-origin:0 0;">01 Efectivo</div>
<div class="t" style="left:381.40px;top:150.69px;font-size:11px;line-height:11px;font-weight:400;color:#111;font-family:'Liberation Sans',sans-serif;transform:scaleX(1.0814);transform-origin:0 0;width:136.0px;overflow:hidden;">PUE Pago en una sola exhib</div>
<div class="t" style="left:558.00px;top:150.69px;font-size:11px;line-height:11px;font-weight:400;color:#111;font-family:'Liberation Sans',sans-serif;transform:scaleX(0.9412);transform-origin:0 0;">CONTADO</div>
<div class="t" style="left:846.30px;top:133.69px;font-size:11px;line-height:11px;font-weight:700;color:#16167a;font-family:'Liberation Sans',sans-serif;transform:scaleX(0.8775);transform-origin:0 0;-webkit-text-stroke:0.2px #16167a;">Cobrado:</div>
<div class="t" style="left:915.40px;top:133.69px;font-size:11px;line-height:11px;font-weight:700;color:#16167a;font-family:'Liberation Sans',sans-serif;transform:scaleX(0.9625);transform-origin:0 0;-webkit-text-stroke:0.2px #16167a;">$0.00</div>
<div class="t" style="left:947.60px;top:153.00px;font-size:13px;line-height:13px;font-weight:700;color:#16167a;font-family:'Liberation Sans',sans-serif;transform:scaleX(0.9897);transform-origin:0 0;-webkit-text-stroke:0.2px #16167a;">Moneda:</div>
<div class="t" style="left:1029.30px;top:152.00px;font-size:13px;line-height:13px;font-weight:700;color:#16167a;font-family:'Liberation Sans',sans-serif;transform:scaleX(0.8718);transform-origin:0 0;-webkit-text-stroke:0.2px #16167a;">T.C</div>
<div class="t" style="left:952.50px;top:173.69px;font-size:11px;line-height:11px;font-weight:400;color:#111;font-family:'Liberation Sans',sans-serif;transform:scaleX(0.8670);transform-origin:0 0;">MXN</div>
<div class="t" style="left:1054.00px;top:173.69px;font-size:11px;line-height:11px;font-weight:400;color:#111;font-family:'Liberation Sans',sans-serif;">1</div>
<div class="t" style="left:1372.30px;top:142.69px;font-size:11px;line-height:11px;font-weight:700;color:#0c2c7a;font-family:'Liberation Sans',sans-serif;transform:scaleX(0.8957);transform-origin:0 0;-webkit-text-stroke:0.2px #0c2c7a;">CFdi Rel.</div>
<div class="t" style="left:40.50px;top:175.00px;font-size:13px;line-height:13px;font-weight:700;color:#16167a;font-family:'Liberation Sans',sans-serif;transform:scaleX(0.8615);transform-origin:0 0;-webkit-text-stroke:0.2px #16167a;">RFC Cliente:</div>
<div class="t" style="left:62.00px;top:193.69px;font-size:11px;line-height:11px;font-weight:400;color:#111;font-family:'Liberation Sans',sans-serif;transform:scaleX(0.9358);transform-origin:0 0;">XAXX010101000</div>
<div class="t" style="left:239.50px;top:177.00px;font-size:13px;line-height:13px;font-weight:400;color:#238f23;font-family:'Liberation Sans',sans-serif;transform:scaleX(1.0108);transform-origin:0 0;-webkit-text-stroke:0.35px #238f23;">Nombre o razón social del cliente</div>
<div class="t" style="left:241.70px;top:195.84px;font-size:12px;line-height:12px;font-weight:700;color:#000;font-family:'Liberation Sans',sans-serif;transform:scaleX(0.9558);transform-origin:0 0;">PUBLICO EN GENERAL</div>
<div class="t" style="left:487.40px;top:172.50px;font-size:13px;line-height:13px;font-weight:700;color:#f01010;font-family:'Liberation Sans',sans-serif;transform:scaleX(0.8882);transform-origin:0 0;">Serie:</div>
<div class="t" style="left:583.50px;top:172.50px;font-size:13px;line-height:13px;font-weight:700;color:#f01010;font-family:'Liberation Sans',sans-serif;transform:scaleX(0.8731);transform-origin:0 0;">Folio:</div>
<div class="t" style="left:785.60px;top:178.00px;font-size:13px;line-height:13px;font-weight:700;color:#16167a;font-family:'Liberation Sans',sans-serif;transform:scaleX(0.8805);transform-origin:0 0;-webkit-text-stroke:0.2px #16167a;">Fecha:</div>
<div class="t" style="left:834.40px;top:177.00px;font-size:13px;line-height:13px;font-weight:400;color:#111;font-family:'Liberation Sans',sans-serif;">19/12/2023</div>
<div class="t" style="left:15.20px;top:226.00px;font-size:13px;line-height:13px;font-weight:700;color:#16167a;font-family:'Liberation Sans',sans-serif;transform:scaleX(0.9247);transform-origin:0 0;-webkit-text-stroke:0.2px #16167a;">Observaciones:</div>
<div class="t" style="left:158.50px;top:223.00px;font-size:13px;line-height:13px;font-weight:700;color:#16167a;font-family:'Liberation Sans',sans-serif;font-style:italic;transform:scaleX(0.8553);transform-origin:0 0;-webkit-text-stroke:0.2px #16167a;">Uso del CFDi:</div>
<div class="t" style="left:242.30px;top:223.69px;font-size:11px;line-height:11px;font-weight:400;color:#111;font-family:'Liberation Sans',sans-serif;transform:scaleX(1.0755);transform-origin:0 0;">..Seleccione uso..</div>
<div class="t" style="left:471.40px;top:222.00px;font-size:13px;line-height:13px;font-weight:700;color:#16167a;font-family:'Liberation Sans',sans-serif;transform:scaleX(0.9579);transform-origin:0 0;-webkit-text-stroke:0.2px #16167a;">Vendedor:</div>
<div class="t" style="left:544.30px;top:220.69px;font-size:11px;line-height:11px;font-weight:400;color:#111;font-family:'Liberation Sans',sans-serif;transform:scaleX(0.9913);transform-origin:0 0;">@Seleccione Vendedor--</div>
<div class="t" style="left:765.10px;top:221.00px;font-size:13px;line-height:13px;font-weight:700;color:#16167a;font-family:'Liberation Sans',sans-serif;transform:scaleX(0.9350);transform-origin:0 0;-webkit-text-stroke:0.2px #16167a;">Exportacion:</div>
<div class="t" style="left:849.10px;top:219.69px;font-size:11px;line-height:11px;font-weight:400;color:#111;font-family:'Liberation Sans',sans-serif;transform:scaleX(0.9500);transform-origin:0 0;">01 | No Aplica</div>
<div class="t" style="left:287.10px;top:246.69px;font-size:11px;line-height:11px;font-weight:700;color:#16167a;font-family:'Liberation Sans',sans-serif;transform:scaleX(0.9237);transform-origin:0 0;-webkit-text-stroke:0.2px #16167a;">% Descuento:</div>
<div class="t" style="left:330.00px;top:266.69px;font-size:11px;line-height:11px;font-weight:400;color:#111;font-family:'Liberation Sans',sans-serif;transform:scaleX(1.0399);transform-origin:0 0;">0.0000</div>
<div class="t" style="left:39.30px;top:300.00px;font-size:13px;line-height:13px;font-weight:700;color:#16167a;font-family:'Liberation Sans',sans-serif;transform:scaleX(0.9412);transform-origin:0 0;-webkit-text-stroke:0.2px #16167a;">Concepto:</div>
<div class="t" style="left:20.20px;top:357.69px;font-size:11px;line-height:11px;font-weight:700;color:#16167a;font-family:'Liberation Sans',sans-serif;transform:scaleX(0.9027);transform-origin:0 0;-webkit-text-stroke:0.2px #16167a;">Cantidad:</div>
<div class="t" style="left:117.00px;top:357.69px;font-size:11px;line-height:11px;font-weight:400;color:#111;font-family:'Liberation Sans',sans-serif;">0</div>
<div class="t" style="left:131.00px;top:358.19px;font-size:11px;line-height:11px;font-weight:700;color:#1c3a9a;font-family:'Liberation Sans',sans-serif;transform:scaleX(0.9007);transform-origin:0 0;text-decoration:underline;">Precio</div>
<div class="t" style="left:249.00px;top:357.69px;font-size:11px;line-height:11px;font-weight:400;color:#111;font-family:'Liberation Sans',sans-serif;">0</div>
<div class="t" style="left:308.80px;top:342.69px;font-size:11px;line-height:11px;font-weight:700;color:#16167a;font-family:'Liberation Sans',sans-serif;transform:scaleX(0.9202);transform-origin:0 0;-webkit-text-stroke:0.2px #16167a;">% Desc.:</div>
<div class="t" style="left:348.00px;top:358.69px;font-size:11px;line-height:11px;font-weight:400;color:#111;font-family:'Liberation Sans',sans-serif;">0</div>
<div class="t" style="left:378.30px;top:342.69px;font-size:11px;line-height:11px;font-weight:700;color:#16167a;font-family:'Liberation Sans',sans-serif;transform:scaleX(0.8992);transform-origin:0 0;-webkit-text-stroke:0.2px #16167a;">% IVA:</div>
<div class="t" style="left:422.40px;top:342.69px;font-size:11px;line-height:11px;font-weight:700;color:#16167a;font-family:'Liberation Sans',sans-serif;transform:scaleX(0.9213);transform-origin:0 0;-webkit-text-stroke:0.2px #16167a;">% Ret IVA:</div>
<div class="t" style="left:483.10px;top:342.69px;font-size:11px;line-height:11px;font-weight:700;color:#16167a;font-family:'Liberation Sans',sans-serif;transform:scaleX(0.9201);transform-origin:0 0;-webkit-text-stroke:0.2px #16167a;">% Ret. ISR:</div>
<div class="t" style="left:559.20px;top:341.69px;font-size:11px;line-height:11px;font-weight:700;color:#16167a;font-family:'Liberation Sans',sans-serif;transform:scaleX(0.8586);transform-origin:0 0;-webkit-text-stroke:0.2px #16167a;">% IEPS:</div>
<div class="t" style="left:587.00px;top:358.69px;font-size:11px;line-height:11px;font-weight:400;color:#888;font-family:'Liberation Sans',sans-serif;">0</div>
<div class="t" style="left:626.20px;top:342.19px;font-size:11px;line-height:11px;font-weight:700;color:#16167a;font-family:'Liberation Sans',sans-serif;transform:scaleX(0.8144);transform-origin:0 0;-webkit-text-stroke:0.2px #16167a;">IEPS:</div>
<div class="t" style="left:647.00px;top:358.69px;font-size:11px;line-height:11px;font-weight:400;color:#111;font-family:'Liberation Sans',sans-serif;">0</div>
<div class="t" style="left:664.30px;top:339.69px;font-size:11px;line-height:11px;font-weight:700;color:#16167a;font-family:'Liberation Sans',sans-serif;transform:scaleX(0.8179);transform-origin:0 0;-webkit-text-stroke:0.2px #16167a;">%</div>
<div class="t" style="left:707.00px;top:357.69px;font-size:11px;line-height:11px;font-weight:400;color:#111;font-family:'Liberation Sans',sans-serif;">0</div>
<div class="t" style="left:826.30px;top:355.69px;font-size:11px;line-height:11px;font-weight:700;color:#0c2c7a;font-family:'Liberation Sans',sans-serif;font-style:italic;transform:scaleX(0.9378);transform-origin:0 0;">Agregar al carrito</div>
<div class="t" style="left:19.00px;top:377.27px;font-size:11.5px;line-height:11.5px;font-weight:400;color:#7a0808;font-family:'Liberation Sans',sans-serif;transform:scaleX(0.9510);transform-origin:0 0;-webkit-text-stroke:0.45px #7a0808;">Carrito de compras</div>
<div class="t" style="left:140.50px;top:377.27px;font-size:11.5px;line-height:11.5px;font-weight:400;color:#7a0808;font-family:'Liberation Sans',sans-serif;transform:scaleX(0.9594);transform-origin:0 0;-webkit-text-stroke:0.45px #7a0808;">Impuestos incluidos</div>
<div class="t" style="left:64.30px;top:396.84px;font-size:12px;line-height:12px;font-weight:700;color:#000;font-family:'Liberation Sans',sans-serif;transform:scaleX(0.9300);transform-origin:0 0;">Serie</div>
<div class="t" style="left:164.80px;top:396.84px;font-size:12px;line-height:12px;font-weight:700;color:#000;font-family:'Liberation Sans',sans-serif;transform:scaleX(0.9300);transform-origin:0 0;">Modelo</div>
<div class="t" style="left:264.50px;top:396.84px;font-size:12px;line-height:12px;font-weight:700;color:#000;font-family:'Liberation Sans',sans-serif;transform:scaleX(0.9300);transform-origin:0 0;">Producto</div>
<div class="t" style="left:463.70px;top:396.84px;font-size:12px;line-height:12px;font-weight:700;color:#000;font-family:'Liberation Sans',sans-serif;transform:scaleX(0.9300);transform-origin:0 0;">Cantidad</div>
<div class="t" style="left:524.00px;top:396.84px;font-size:12px;line-height:12px;font-weight:700;color:#000;font-family:'Liberation Sans',sans-serif;transform:scaleX(0.9300);transform-origin:0 0;">Precio</div>
<div class="t" style="left:584.80px;top:396.84px;font-size:12px;line-height:12px;font-weight:700;color:#000;font-family:'Liberation Sans',sans-serif;transform:scaleX(0.9300);transform-origin:0 0;">Descuent</div>
<div class="t" style="left:644.50px;top:396.84px;font-size:12px;line-height:12px;font-weight:700;color:#000;font-family:'Liberation Sans',sans-serif;transform:scaleX(0.9300);transform-origin:0 0;">SubTotal</div>
<div class="t" style="left:724.70px;top:396.84px;font-size:12px;line-height:12px;font-weight:700;color:#000;font-family:'Liberation Sans',sans-serif;transform:scaleX(0.9300);transform-origin:0 0;">IVA</div>
<div class="t" style="left:785.30px;top:396.84px;font-size:12px;line-height:12px;font-weight:700;color:#000;font-family:'Liberation Sans',sans-serif;transform:scaleX(0.9300);transform-origin:0 0;">Total</div>
<div class="t" style="left:863.90px;top:396.84px;font-size:12px;line-height:12px;font-weight:700;color:#000;font-family:'Liberation Sans',sans-serif;transform:scaleX(0.9300);transform-origin:0 0;">Observaciones</div>
<div class="t" style="left:964.60px;top:396.84px;font-size:12px;line-height:12px;font-weight:700;color:#000;font-family:'Liberation Sans',sans-serif;transform:scaleX(0.9300);transform-origin:0 0;">Eliminar</div>
<div class="t" style="left:1065.00px;top:396.84px;font-size:12px;line-height:12px;font-weight:700;color:#000;font-family:'Liberation Sans',sans-serif;transform:scaleX(0.9300);transform-origin:0 0;">Info Aduana</div>
<div class="t" style="left:10.70px;top:813.41px;font-size:10.5px;line-height:10.5px;font-weight:700;color:#16167a;font-family:'Liberation Sans',sans-serif;transform:scaleX(1.0164);transform-origin:0 0;-webkit-text-stroke:0.2px #16167a;">Folio fiscal:</div>
<div class="t" style="left:23.30px;top:831.11px;font-size:10.5px;line-height:10.5px;font-weight:700;color:#16167a;font-family:'Liberation Sans',sans-serif;transform:scaleX(1.0232);transform-origin:0 0;-webkit-text-stroke:0.2px #16167a;">Estatus:</div>
<div class="t" style="left:84.00px;top:831.70px;font-size:13px;line-height:13px;font-weight:700;color:#000;font-family:'Liberation Sans',sans-serif;transform:scaleX(0.9044);transform-origin:0 0;">Activa</div>
<div class="t" style="left:10.00px;top:855.84px;font-size:12px;line-height:12px;font-weight:700;color:#16167a;font-family:'Liberation Sans',sans-serif;transform:scaleX(0.9232);transform-origin:0 0;-webkit-text-stroke:0.2px #16167a;">CERO PESOS  00/100 MXN</div>
<div class="t" style="left:973.20px;top:815.14px;font-size:12px;line-height:12px;font-weight:700;color:#16167a;font-family:'Liberation Sans',sans-serif;transform:scaleX(0.8335);transform-origin:0 0;-webkit-text-stroke:0.2px #16167a;">Cantidad de productos: 0</div>
<div class="t" style="left:1151.00px;top:812.09px;font-size:11px;line-height:11px;font-weight:700;color:#16167a;font-family:'Liberation Sans',sans-serif;-webkit-text-stroke:0.2px #16167a;">%</div>
<div class="t" style="left:1193.00px;top:812.09px;font-size:11px;line-height:11px;font-weight:700;color:#16167a;font-family:'Liberation Sans',sans-serif;-webkit-text-stroke:0.2px #16167a;">:</div>
<div class="t" style="left:1161.00px;top:826.69px;font-size:11px;line-height:11px;font-weight:700;color:#16167a;font-family:'Liberation Sans',sans-serif;transform:scaleX(0.9221);transform-origin:0 0;-webkit-text-stroke:0.2px #16167a;">Ret IVA:</div>
<div class="t" style="left:1149.60px;top:841.50px;font-size:13px;line-height:13px;font-weight:700;color:#16167a;font-family:'Liberation Sans',sans-serif;transform:scaleX(0.9082);transform-origin:0 0;-webkit-text-stroke:0.2px #16167a;">Ret. ISR:</div>
<div class="t" style="left:1263.60px;top:810.84px;font-size:12px;line-height:12px;font-weight:400;color:#5e5e5e;font-family:'Liberation Sans',sans-serif;transform:scaleX(0.9057);transform-origin:0 0;">$0.00</div>
<div class="t" style="left:1263.60px;top:825.84px;font-size:12px;line-height:12px;font-weight:400;color:#5e5e5e;font-family:'Liberation Sans',sans-serif;transform:scaleX(0.9057);transform-origin:0 0;">$0.00</div>
<div class="t" style="left:1263.60px;top:840.84px;font-size:12px;line-height:12px;font-weight:400;color:#5e5e5e;font-family:'Liberation Sans',sans-serif;transform:scaleX(0.9057);transform-origin:0 0;">$0.00</div>
<div class="t" style="left:1326.00px;top:815.84px;font-size:12px;line-height:12px;font-weight:700;color:#16167a;font-family:'Liberation Sans',sans-serif;transform:scaleX(0.8342);transform-origin:0 0;-webkit-text-stroke:0.2px #16167a;">Sub Total:</div>
<div class="t" style="left:1319.20px;top:832.84px;font-size:12px;line-height:12px;font-weight:700;color:#16167a;font-family:'Liberation Sans',sans-serif;transform:scaleX(0.8417);transform-origin:0 0;-webkit-text-stroke:0.2px #16167a;">Descuento:</div>
<div class="t" style="left:1349.80px;top:849.84px;font-size:12px;line-height:12px;font-weight:700;color:#16167a;font-family:'Liberation Sans',sans-serif;transform:scaleX(0.7785);transform-origin:0 0;-webkit-text-stroke:0.2px #16167a;">IEPS:</div>
<div class="t" style="left:1442.50px;top:815.84px;font-size:12px;line-height:12px;font-weight:400;color:#5e5e5e;font-family:'Liberation Sans',sans-serif;transform:scaleX(0.9057);transform-origin:0 0;">$0.00</div>
<div class="t" style="left:1442.50px;top:832.84px;font-size:12px;line-height:12px;font-weight:400;color:#5e5e5e;font-family:'Liberation Sans',sans-serif;transform:scaleX(0.9057);transform-origin:0 0;">$0.00</div>
<div class="t" style="left:1442.50px;top:849.84px;font-size:12px;line-height:12px;font-weight:400;color:#5e5e5e;font-family:'Liberation Sans',sans-serif;transform:scaleX(0.9057);transform-origin:0 0;">$0.00</div>
<div class="t" style="left:1496.40px;top:815.00px;font-size:13px;line-height:13px;font-weight:700;color:#2e8b2e;font-family:'Liberation Sans',sans-serif;transform:scaleX(0.9362);transform-origin:0 0;">Sub Total:</div>
<div class="t" style="left:1533.00px;top:831.50px;font-size:13px;line-height:13px;font-weight:700;color:#2e8b2e;font-family:'Liberation Sans',sans-serif;transform:scaleX(0.8784);transform-origin:0 0;">IVA:</div>
<div class="t" style="left:1517.00px;top:850.15px;font-size:14px;line-height:14px;font-weight:700;color:#2e8b2e;font-family:'Liberation Sans',sans-serif;transform:scaleX(1.0249);transform-origin:0 0;">Total:</div>
<div class="t" style="left:1632.50px;top:813.84px;font-size:12px;line-height:12px;font-weight:400;color:#5e5e5e;font-family:'Liberation Sans',sans-serif;transform:scaleX(0.9057);transform-origin:0 0;">$0.00</div>
<div class="t" style="left:1632.50px;top:830.84px;font-size:12px;line-height:12px;font-weight:400;color:#5e5e5e;font-family:'Liberation Sans',sans-serif;transform:scaleX(0.9057);transform-origin:0 0;">$0.00</div>
<div class="t" style="left:1628.00px;top:848.15px;font-size:14px;line-height:14px;font-weight:400;color:#5e5e5e;font-family:'Liberation Sans',sans-serif;transform:scaleX(0.9045);transform-origin:0 0;">$0.00</div>
<div class="t" style="left:3.00px;top:883.84px;font-size:12px;line-height:12px;font-weight:700;color:#263a7a;font-family:'Liberation Sans',sans-serif;transform:scaleX(1.0145);transform-origin:0 0;-webkit-text-stroke:0.2px #263a7a;">Facturación</div>
<div class="t" style="left:160.00px;top:883.84px;font-size:12px;line-height:12px;font-weight:700;color:#263a7a;font-family:'Liberation Sans',sans-serif;transform:scaleX(1.0182);transform-origin:0 0;-webkit-text-stroke:0.2px #263a7a;">Ctrl+T = Traer cotización,</div>
<div class="t" style="left:321.00px;top:883.84px;font-size:12px;line-height:12px;font-weight:700;color:#263a7a;font-family:'Liberation Sans',sans-serif;transform:scaleX(1.0072);transform-origin:0 0;-webkit-text-stroke:0.2px #263a7a;">Ctrl+N = Traer nota de venta (Ticket),</div>
<div class="t" style="left:544.40px;top:883.84px;font-size:12px;line-height:12px;font-weight:700;color:#263a7a;font-family:'Liberation Sans',sans-serif;transform:scaleX(0.9962);transform-origin:0 0;-webkit-text-stroke:0.2px #263a7a;">Ctrl+D = Traer pedido,</div>
<div class="t" style="left:678.40px;top:883.84px;font-size:12px;line-height:12px;font-weight:700;color:#263a7a;font-family:'Liberation Sans',sans-serif;transform:scaleX(1.0042);transform-origin:0 0;-webkit-text-stroke:0.2px #263a7a;">Ctrl+F=Pre cargar documento</div>
<div class="t" style="left:53.80px;top:921.69px;font-size:11px;line-height:11px;font-weight:700;color:#5a5a5a;font-family:'Liberation Sans',sans-serif;transform:scaleX(0.8364);transform-origin:0 0;">C<u>o</u>bros</div>
<div class="t" style="left:135.00px;top:922.67px;font-size:11.5px;line-height:11.5px;font-weight:700;color:#5a5a5a;font-family:'Liberation Sans',sans-serif;transform:scaleX(0.9912);transform-origin:0 0;"><u>A</u>duana</div>
<div class="t" style="left:1042.70px;top:921.43px;font-size:11.3px;line-height:11.3px;font-weight:700;color:#0c2a80;font-family:'Liberation Sans',sans-serif;transform:scaleX(0.8483);transform-origin:0 0;-webkit-text-stroke:0.2px #0c2a80;"><u>B</u>uscar</div>
<div class="t" style="left:1129.00px;top:921.43px;font-size:11.3px;line-height:11.3px;font-weight:700;color:#0c2a80;font-family:'Liberation Sans',sans-serif;transform:scaleX(0.8977);transform-origin:0 0;-webkit-text-stroke:0.2px #0c2a80;"><u>N</u>uevo</div>
<div class="t" style="left:1204.90px;top:921.43px;font-size:11.3px;line-height:11.3px;font-weight:700;color:#0c2a80;font-family:'Liberation Sans',sans-serif;transform:scaleX(0.8919);transform-origin:0 0;-webkit-text-stroke:0.2px #0c2a80;"><u>G</u>uardar</div>
<div class="t" style="left:1291.30px;top:921.43px;font-size:11.3px;line-height:11.3px;font-weight:700;color:#6a6a6a;font-family:'Liberation Sans',sans-serif;transform:scaleX(0.9006);transform-origin:0 0;"><u>T</u>imbrar</div>
<div class="t" style="left:1374.90px;top:921.43px;font-size:11.3px;line-height:11.3px;font-weight:700;color:#6a6a6a;font-family:'Liberation Sans',sans-serif;transform:scaleX(0.9044);transform-origin:0 0;">Generar</div>
<div class="t" style="left:1469.80px;top:921.43px;font-size:11.3px;line-height:11.3px;font-weight:700;color:#6a6a6a;font-family:'Liberation Sans',sans-serif;transform:scaleX(0.8742);transform-origin:0 0;">En<u>v</u>iar</div>
<div class="t" style="left:1542.90px;top:921.43px;font-size:11.3px;line-height:11.3px;font-weight:700;color:#6a6a6a;font-family:'Liberation Sans',sans-serif;transform:scaleX(0.8631);transform-origin:0 0;">Cance<u>l</u>ar</div>
<div class="t" style="left:1639.90px;top:921.43px;font-size:11.3px;line-height:11.3px;font-weight:700;color:#0c2a80;font-family:'Liberation Sans',sans-serif;transform:scaleX(0.8608);transform-origin:0 0;-webkit-text-stroke:0.2px #0c2a80;"><u>C</u>errar</div>
</body></html>
